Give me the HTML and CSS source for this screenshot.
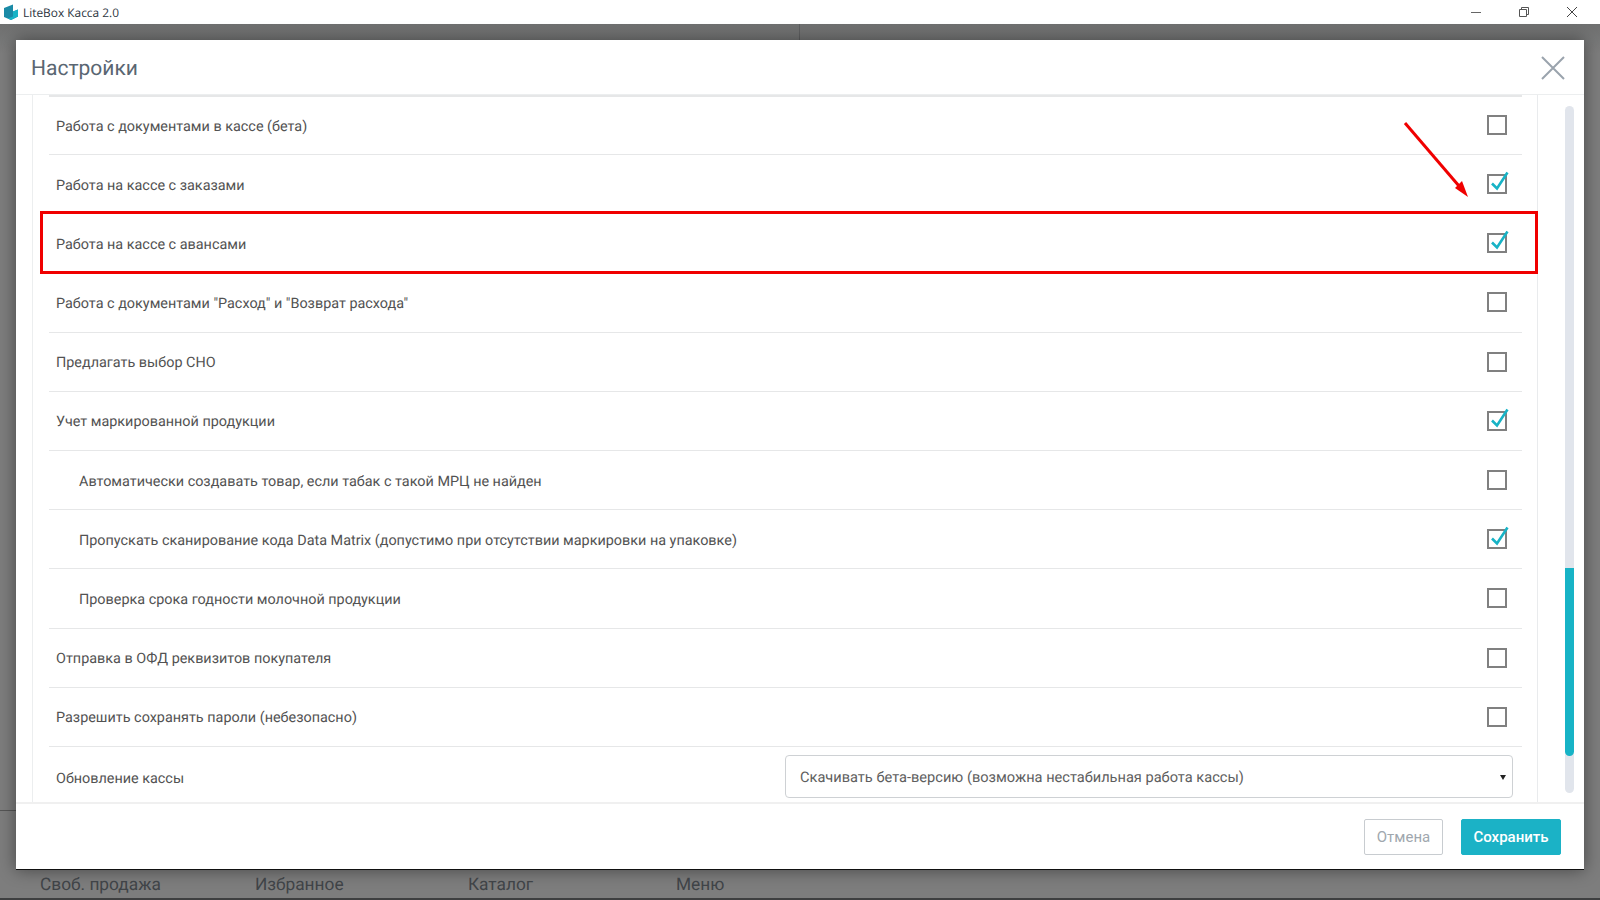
FILE: index.html
```html
<!DOCTYPE html>
<html lang="ru">
<head>
<meta charset="utf-8">
<title>LiteBox Касса 2.0</title>
<link rel="stylesheet" href="styles.css">
</head>
<body>
<svg width="0" height="0" class="defs"><defs><path id="tick" d="M5 9.5 10 14.5 20.5 -1.5" stroke="#17b3c6" stroke-width="2.6" fill="none"/></defs></svg>
<div class="window">
  <header class="titlebar">
    <svg class="logo" width="18" height="18" viewBox="0 0 18 18"><path d="M2 5 11 1.5 11 8.5 16 6.5 16 13.5 9 17 2 14Z" fill="#1a8aa6"/><path d="M11 8.5 16 6.5 16 13.5 9 17 6 15.6 11 13.5Z" fill="#17b3c6"/></svg>
    <span class="apptitle">LiteBox Касса 2.0</span>
    <div class="winctl">
      <svg width="12" height="12" viewBox="0 0 12 12"><path d="M1 6.5H11" stroke="#666" fill="none"/></svg>
      <svg width="12" height="12" viewBox="0 0 12 12"><path d="M1.5 3.5H8.5V10.5H1.5ZM3.5 3.5V1.5H10.5V8.5H8.5" stroke="#555" fill="none"/></svg>
      <svg width="12" height="12" viewBox="0 0 12 12"><path d="M1 1 11 11M11 1 1 11" stroke="#444" fill="none"/></svg>
    </div>
  </header>
  <div class="backdrop">
    <div class="leftline"></div>
    <div class="topstrip"><div class="topright"></div></div>
    <section class="dialog">
      <div class="dlghead">
        <h1>Настройки</h1>
        <svg class="dlgclose" width="24" height="24" viewBox="0 0 24 24"><path d="M1 1 23 23M23 1 1 23" stroke="#9aa3ad" stroke-width="2" fill="none"/></svg>
      </div>
      <div class="dlgbody">
        <div class="listwrap">
          <div class="row"><span>Работа с документами в кассе (бета)</span><i class="cb"></i></div>
          <div class="row"><span>Работа на кассе с заказами</span><i class="cb"><svg class="tick" width="20" height="20"><use href="#tick"/></svg></i></div>
          <div class="row"><span>Работа на кассе с авансами</span><i class="cb"><svg class="tick" width="20" height="20"><use href="#tick"/></svg></i></div>
          <div class="row"><span>Работа с документами "Расход" и "Возврат расхода"</span><i class="cb"></i></div>
          <div class="row"><span>Предлагать выбор СНО</span><i class="cb"></i></div>
          <div class="row"><span>Учет маркированной продукции</span><i class="cb"><svg class="tick" width="20" height="20"><use href="#tick"/></svg></i></div>
          <div class="row sub"><span>Автоматически создавать товар, если табак с такой МРЦ не найден</span><i class="cb"></i></div>
          <div class="row sub"><span>Пропускать сканирование кода Data Matrix (допустимо при отсутствии маркировки на упаковке)</span><i class="cb"><svg class="tick" width="20" height="20"><use href="#tick"/></svg></i></div>
          <div class="row sub"><span>Проверка срока годности молочной продукции</span><i class="cb"></i></div>
          <div class="row"><span>Отправка в ОФД реквизитов покупателя</span><i class="cb"></i></div>
          <div class="row"><span>Разрешить сохранять пароли (небезопасно)</span><i class="cb"></i></div>
          <div class="row last"><span class="lastlabel">Обновление кассы</span><div class="select"><span class="selecttext">Скачивать бета-версию (возможна нестабильная работа кассы)</span><b class="caret"></b></div></div>
        </div>
        <aside class="scrollcol"><div class="track"><div class="thumb"></div></div></aside>
      </div>
      <footer class="dlgfoot">
        <button class="btn cancel">Отмена</button>
        <button class="btn save">Сохранить</button>
      </footer>
    </section>
    <nav class="tabs"><span class="t1">Своб. продажа</span><span class="t2">Избранное</span><span class="t3">Каталог</span><span class="t4">Меню</span></nav>
  </div>
  <div class="redbox"></div>
  <svg class="redarrow" width="80" height="90" viewBox="0 0 80 90"><path d="M2 3 56 66" stroke="#f00000" stroke-width="3" fill="none"/><path d="M65 77 52 68 59 61Z" fill="#f00000"/></svg>
</div>
</body>
</html>
```
FILE: styles.css
```css
*{box-sizing:border-box}
html,body{margin:0;padding:0;height:100%;overflow:hidden}
body{font-family:Roboto,"Liberation Sans",sans-serif;color:#4a4a4a;text-rendering:geometricPrecision}
.defs{position:absolute}
.window{position:relative;width:1600px;height:900px;display:flex;flex-direction:column;background:#7b7c7d}
.titlebar{height:24px;background:#fff;display:flex;align-items:center;padding-left:2px;flex:none}
.logo{flex:none}
.apptitle{font:11.9px "Open Sans","Liberation Sans",sans-serif;color:#2b3440;margin:1px 0 0 3px}
.winctl{margin-left:auto;display:flex;gap:36px;padding-right:22px}
.backdrop{flex:1;display:flex;flex-direction:column;position:relative;background:linear-gradient(#6f7070,#7d7d7d 30px)}
.leftline{position:absolute;left:0;top:786px;width:16px;height:1px;background:#555}
.topstrip{height:16px;flex:none;display:flex;justify-content:flex-end}
.topright{width:801px;border-left:1px solid #5f6061}
.dialog{margin:0 16px;height:830px;flex:none;background:#fff;display:flex;flex-direction:column;box-shadow:0 0 16px rgba(0,0,0,.45);border-bottom:1px solid #111;position:relative}
.dlghead{height:55px;flex:none;display:flex;align-items:center;justify-content:space-between;padding:1px 19px 0 15px;border-bottom:1px solid #eceeef}
.dlghead h1{margin:2px 0 0;font-size:21px;font-weight:400;color:#5a6672}
.dlgbody{flex:1;display:flex;min-height:0;overflow:hidden}
.listwrap{width:1506px;margin-left:16px;padding:0 15px 0 16px;border-left:1px solid #eceeef;border-right:1px solid #e9ebed;flex:none;overflow:hidden}
.row{height:59.2px;display:flex;align-items:center;justify-content:space-between;border-bottom:1px solid #e6e7e8;padding:0 15px 0 7px;font-size:14.4px;color:#525252}
.row>span{margin-top:2px}
.row:first-child{border-top:2px solid #e6e7e8;height:60px}
.row:first-child .cb{margin-top:-2px}
.row.sub{padding-left:30px}
.row.last{border-bottom:0;height:60px;padding-right:9px}
.row>.lastlabel{margin-top:3px}
.cb{width:20px;height:20px;border:2px solid #808080;background:#fff;position:relative;display:block;flex:none}
.tick{position:absolute;left:-2px;top:-2px;overflow:visible}
.select{width:728px;height:43px;margin-top:-1px;border:1px solid #ced1d4;border-radius:4px;padding:0 14px;display:flex;align-items:center;color:#5e5e5e;font-size:14.6px;position:relative}
.selecttext{margin-top:2px}
.caret{position:absolute;right:6px;top:19px;border:solid transparent;border-width:5px 3px 0;border-top-color:#222}
.scrollcol{flex:1;position:relative}
.track{position:absolute;left:27px;top:11px;width:9px;height:687px;background:#e1e5ec;border-radius:5px;overflow:hidden}
.thumb{position:absolute;left:0;right:0;top:462px;height:188px;background:#17b3c6;border-radius:0 0 5px 5px}
.dlgfoot{height:67px;flex:none;display:flex;justify-content:flex-end;align-items:flex-start;gap:18px;padding:15px 23px 0 0;border-top:2px solid #f0f0f0}
.btn{height:36px;font:15px Roboto,"Liberation Sans",sans-serif;border-radius:2px;padding:0}
.cancel{width:79px;background:#fff;border:1px solid #c8ccd0;color:#a0a7ae}
.save{width:100px;background:#1bb2c6;border:1px solid #1bb2c6;color:#fff;font-weight:500}
.tabs{flex:1;position:relative;font-size:17.3px;color:#3f4347;border-bottom:2px solid #3e3f40}
.tabs span{position:absolute;top:5px}
.t1{left:40px}.t2{left:255px}.t3{left:468px}.t4{left:676px}
.redbox{position:absolute;left:40px;top:211px;width:1498px;height:63px;border:3px solid #f00000}
.redarrow{position:absolute;left:1403px;top:120px}
```
